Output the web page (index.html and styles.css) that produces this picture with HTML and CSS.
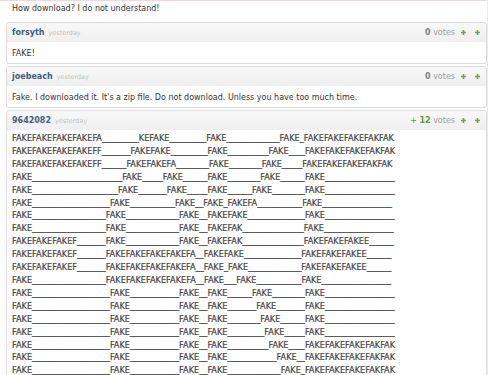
FILE: index.html
```html
<!DOCTYPE html>
<html>
<head>
<meta charset="utf-8">
<link rel="stylesheet" href="styles.css">
</head>
<body>
<div class="page">
  <p class="question">How download? I do not understand!</p>
  <div class="comments">
    <div class="comment">
      <div class="c-head">
        <span class="user">forsyth</span><span class="time">yesterday</span>
        <span class="votes"><b>0</b> votes</span>
        <span class="vbtn"><svg viewBox="0 0 6 6"><path d="M2 0h2v2h2v2h-2v2h-2v-2h-2v-2h2z"/></svg></span>
        <span class="vbtn"><svg viewBox="0 0 6 6"><path d="M2 0h2v2h2v2h-2v2h-2v-2h-2v-2h2z"/></svg></span>
      </div>
      <div class="c-body">FAKE!</div>
    </div>
    <div class="comment">
      <div class="c-head">
        <span class="user">joebeach</span><span class="time">yesterday</span>
        <span class="votes"><b>0</b> votes</span>
        <span class="vbtn"><svg viewBox="0 0 6 6"><path d="M2 0h2v2h2v2h-2v2h-2v-2h-2v-2h2z"/></svg></span>
        <span class="vbtn"><svg viewBox="0 0 6 6"><path d="M2 0h2v2h2v2h-2v2h-2v-2h-2v-2h2z"/></svg></span>
      </div>
      <div class="c-body">Fake. I downloaded it. It's a zip file. Do not download. Unless you have too much time.</div>
    </div>
    <div class="comment">
      <div class="c-head">
        <span class="user">9642082</span><span class="time">yesterday</span>
        <span class="votes"><span class="plus">+ <b>12</b></span> votes</span>
        <span class="vbtn"><svg viewBox="0 0 6 6"><path d="M2 0h2v2h2v2h-2v2h-2v-2h-2v-2h2z"/></svg></span>
        <span class="vbtn"><svg viewBox="0 0 6 6"><path d="M2 0h2v2h2v2h-2v2h-2v-2h-2v-2h2z"/></svg></span>
      </div>
      <div class="c-body ascii">
<div class="ln">FAKEFAKEFAKEFAKEFA_________KEFAKE_________FAKE_____________FAKE_FAKEFAKEFAKEFAKFAK</div>
<div class="ln">FAKEFAKEFAKEFAKEFF_______FAKEFAKE_________FAKE__________FAKE____FAKEFAKEFAKEFAKFAK</div>
<div class="ln">FAKEFAKEFAKEFAKEFF______FAKEFAKEFA________FAKE________FAKE_____FAKEFAKEFAKEFAKFAK</div>
<div class="ln">FAKE______________________FAKE_____FAKE______FAKE________FAKE______FAKE_________________</div>
<div class="ln">FAKE_____________________FAKE_______FAKE_____FAKE______FAKE________FAKE_________________</div>
<div class="ln">FAKE___________________FAKE___________FAKE__FAKE_FAKEFA___________FAKE_________________</div>
<div class="ln">FAKE__________________FAKE_____________FAKE__FAKEFAKE______________FAKE_________________</div>
<div class="ln">FAKE__________________FAKE_____________FAKE__FAKEFAK_______________FAKE_________________</div>
<div class="ln">FAKEFAKEFAKEF_______FAKE_____________FAKE__FAKEFAK_______________FAKEFAKEFAKEE______</div>
<div class="ln">FAKEFAKEFAKEF_______FAKEFAKEFAKEFAKEFA__FAKEFAKE______________FAKEFAKEFAKEE______</div>
<div class="ln">FAKEFAKEFAKEF_______FAKEFAKEFAKEFAKEFA__FAKE_FAKE_____________FAKEFAKEFAKEE______</div>
<div class="ln">FAKE__________________FAKEFAKEFAKEFAKEFA__FAKE___FAKE___________FAKE_________________</div>
<div class="ln">FAKE___________________FAKE____________FAKE__FAKE______FAKE________FAKE_________________</div>
<div class="ln">FAKE___________________FAKE____________FAKE__FAKE_______FAKE_______FAKE_________________</div>
<div class="ln">FAKE___________________FAKE____________FAKE__FAKE________FAKE______FAKE_________________</div>
<div class="ln">FAKE___________________FAKE____________FAKE__FAKE_________FAKE_____FAKE_________________</div>
<div class="ln">FAKE___________________FAKE____________FAKE__FAKE__________FAKE____FAKEFAKEFAKEFAKFAK</div>
<div class="ln">FAKE___________________FAKE____________FAKE__FAKE____________FAKE__FAKEFAKEFAKEFAKFAK</div>
<div class="ln">FAKE___________________FAKE____________FAKE__FAKE_____________FAKE_FAKEFAKEFAKEFAKFAK</div>
      </div>
    </div>
  </div>
</div>
</body>
</html>
```

FILE: styles.css
```css
html, body {
  margin: 0;
  padding: 0;
  background: #fff;
}
body {
  font-family: "DejaVu Sans", Verdana, sans-serif;
  font-size: 8px;
  color: #333;
  overflow: hidden;
}
.page {
  width: 487px;
  border-top: 1px solid #f2d6da;
  border-right: 1px solid #ececec;
  min-height: 374px;
}
.question {
  margin: 0;
  padding: 1px 0 0 12px;
  line-height: 13px;
}
.comments {
  margin-top: 7px;
  padding-left: 6px;
}
.comment {
  border: 1px solid #dcdcdc;
  border-radius: 3px;
  background: #fff;
  margin-bottom: 2px;
}
.c-head {
  height: 19px;
  display: flex;
  align-items: center;
  padding: 0 6px 0 5px;
  background: linear-gradient(#f8f8f8, #efefef);
  border-radius: 3px 3px 0 0;
}
.user {
  font-weight: bold;
  color: #3e5f82;
}
.time {
  margin-left: 4px;
  font-size: 6.5px;
  color: #c4c4c4;
}
.votes {
  margin-left: auto;
  color: #a0a0a0;
}
.votes b {
  color: #808080;
}
.plus {
  color: #5f9a3c;
}
.plus b {
  color: #5f9a3c;
}
.vbtn {
  display: flex;
  margin-left: 6px;
}
.vbtn + .vbtn {
  margin-left: 9px;
}
.vbtn svg {
  width: 5px;
  height: 5px;
  fill: #76a352;
}
.c-body {
  padding: 5px 5px 3px;
  line-height: 13px;
}
.ascii {
  padding-top: 2px;
  font-size: 8.2px;
  line-height: 12.9px;
  color: #444;
  -webkit-text-stroke: 0.2px #444;
}
.ln {
  white-space: pre;
}
```
